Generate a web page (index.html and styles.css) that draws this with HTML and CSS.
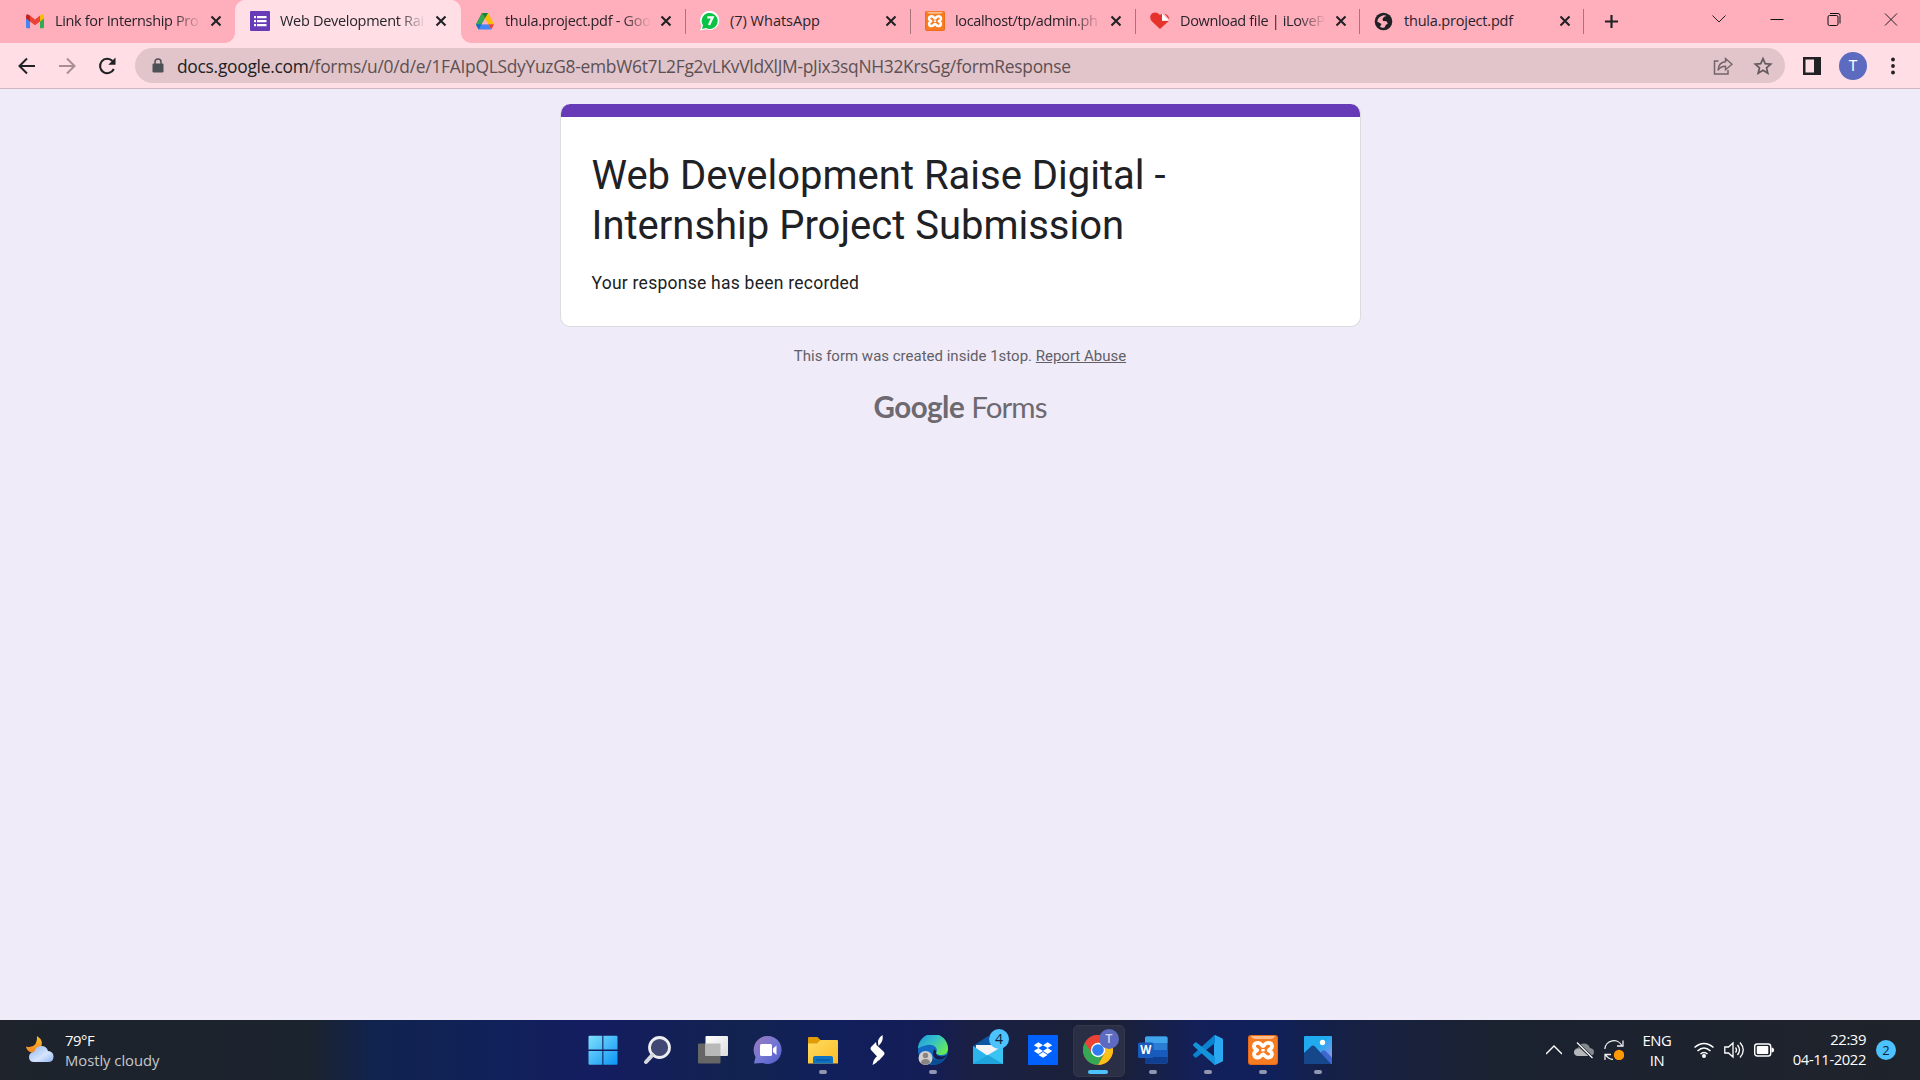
FILE: index.html
```html
<!DOCTYPE html>
<html lang="en">
<head>
<meta charset="utf-8">
<title>Web Development Raise Digital - Internship Project Submission</title>
<link rel="stylesheet" href="styles.css">
</head>
<body>
<svg class="defs" width="0" height="0">
  <defs>
    <symbol id="x" viewBox="0 0 16 16"><path d="M3.5 3.5l9 9M12.5 3.5l-9 9" stroke="#202124" stroke-width="2.1" fill="none"/></symbol>
    <symbol id="xampp" viewBox="0 0 30 30">
      <rect width="30" height="30" rx="3" fill="#e8691a"/><rect x="1" y="1" width="28" height="28" rx="2" fill="#f67b21"/><path d="M3 1h24q-1 3-5 3H8Q4 4 3 1z" fill="#ffbd8c"/>
      <path d="M15 11.200C13.500 11.200 13.600 7.800 10 7.800C5.200 7.800 5.200 12.600 7.600 14L9.200 15.200L7.600 16.400C5.200 18 5.600 22.500 9.700 22.500C13.400 22.500 13.500 19.400 15 19.400C16.500 19.400 16.600 22.500 20.300 22.500C24.400 22.500 24.800 18 22.400 16.400L20.800 15.200L22.400 14C24.800 12.600 24.800 7.800 20 7.800C16.400 7.800 16.500 11.200 15 11.200z" fill="none" stroke="#fff" stroke-width="3.8" stroke-linejoin="round"/><path d="M13.300 15.200h3.400" stroke="#fff" stroke-width="2.400"/>
    </symbol>
  </defs>
</svg>
<div class="screen">
  <header class="tabstrip">
    <div class="tabs">
      <div class="tab">
        <svg class="fav" viewBox="0 0 20 20"><path d="M1 5.500V16.200Q1 17.300 2.200 17.300H5V9z" fill="#4285f4"/><path d="M19 5.500V16.200Q19 17.300 17.800 17.300H15V9z" fill="#34a853"/><path d="M1 5.500Q1 3 3 3.400L5 4.600V10.500L1 7.400z" fill="#c5221f"/><path d="M5 4.600l5 3.800 5-3.800V10.500l-5 3.800-5-3.800z" fill="#ea4335"/><path d="M15 4.600l2-1.200Q19 3 19 5.500v1.900l-4 3.100z" fill="#fbbc04"/></svg>
        <span class="title fade t1">Link for Internship Pro</span><svg class="close"><use href="#x"/></svg>
      </div>
      <div class="tab active">
        <svg class="fav" viewBox="0 0 20 20"><rect width="20" height="20" rx="1" fill="#673ab7"/><path d="M4 5h2v2.200H4zM4 9h2v2.200H4zM4 13h2v2.200H4zM7 5h9.500v2.200H7zM7 9h9.500v2.200H7zM7 13h9.500v2.200H7z" fill="#fff"/></svg>
        <span class="title fade t2">Web Development Rai</span><svg class="close"><use href="#x"/></svg>
      </div>
      <div class="tab">
        <svg class="fav" viewBox="0 0 20 20"><path d="M7 2h6L6.500 13.500 3.700 18.500 1 13.500z" fill="#188038"/><path d="M7 2l3 5.300-6.300 11.200L1 13.300z" fill="#34a853"/><path d="M7 2h6l6 11.300h-6z" fill="#fbbc04"/><path d="M7 2h6l-3 5.300z" fill="#188038"/><path d="M13 13.300h6l-2.700 5.200z" fill="#ea4335"/><path d="M6.500 13.300H13l3.300 5.200H3.700z" fill="#4285f4"/><path d="M6.500 13.300H1l2.700 5.200z" fill="#1967d2"/><path d="M10 7.500l3.300 5.800H6.700z" fill="#ffb0bc"/></svg>
        <span class="title fade t3">thula.project.pdf - Goo</span><svg class="close"><use href="#x"/></svg>
      </div>
      <div class="tab sep">
        <svg class="fav" viewBox="0 0 20 20"><path d="M.2 19.500L1.500 14.500A9.600 9.600 0 1 1 6 18.300z" fill="#fff"/><path d="M2 18l1-3.700A8 8 0 1 1 6 17z" fill="#0ac245"/><path d="M7.300 6.300h5.300L9 14" fill="none" stroke="#fff" stroke-width="2.300"/></svg>
        <span class="title t4">(7) WhatsApp</span><svg class="close"><use href="#x"/></svg>
      </div>
      <div class="tab sep">
        <svg class="fav"><use href="#xampp"/></svg>
        <span class="title fade t5">localhost/tp/admin.ph</span><svg class="close"><use href="#x"/></svg>
      </div>
      <div class="tab sep">
        <svg class="fav" viewBox="0 0 20 20"><path d="M10 18L1.500 10Q-1.500 5 2.200 2.300 6.500.2 10 4l2-1.500v7h7.300z" fill="#e5322d"/><path d="M12 2.500l7.300 7.300H12z" fill="#fff"/><path d="M14.500 2.500q4.500 1.500 4.700 6z" fill="#e5322d"/></svg>
        <span class="title fade t6">Download file | iLoveP</span><svg class="close"><use href="#x"/></svg>
      </div>
      <div class="tab sep last">
        <svg class="fav" viewBox="0 0 20 20"><circle cx="9.500" cy="10.500" r="8.800" fill="#202124"/><path d="M9.500 4.200l2.500.3-1.200 3-2.300.8L9 10l3.500.2 1.300 2.300-2 1.500-1.300 2.500q-2.500.8-4.500-.7L7.500 13l-4.300-2.500Q4 5.500 9.500 4.200z" fill="#ffaebc"/><path d="M10.500 5.500l4 .5 1 3-4 .5-3-2z" fill="#202124"/></svg>
        <span class="title t7">thula.project.pdf</span><svg class="close"><use href="#x"/></svg>
      </div>
    </div>
    <svg class="newtab" viewBox="0 0 16 16"><path d="M8 1v14M1 8h14" stroke="#202124" stroke-width="2.300"/></svg>
    <div class="winctl">
      <svg viewBox="0 0 16 16"><path d="M1.500 4.500L8 11l6.500-6.500" stroke="#222" fill="none"/></svg>
      <svg viewBox="0 0 16 16"><path d="M1.500 8.500h13" stroke="#111"/></svg>
      <svg viewBox="0 0 16 16"><rect x="2" y="4.500" width="10" height="10" rx="1.500" fill="none" stroke="#111"/><path d="M4 2.500h8Q14 2.500 14 4.500v8" fill="none" stroke="#111"/></svg>
      <svg viewBox="0 0 16 16"><path d="M2 2.500l12 12M14 2.500l-12 12" stroke="#222"/></svg>
    </div>
  </header>
  <nav class="toolbar">
    <svg class="nav" viewBox="0 0 20 20"><path d="M18 10H3M10 2.500L2.500 10l7.500 7.500" fill="none" stroke="#202124" stroke-width="2"/></svg>
    <svg class="nav" viewBox="0 0 20 20"><path d="M2 10h15M10 2.500l7.500 7.500-7.500 7.500" fill="none" stroke="#a98e93" stroke-width="2"/></svg>
    <svg class="nav" viewBox="0 0 20 20"><path d="M16.800 13A7.200 7.200 0 1 1 15.500 5" fill="none" stroke="#202124" stroke-width="2.100"/><path d="M18.500 1.500v7.200h-7.200z" fill="#202124"/></svg>
    <div class="omnibox">
      <svg class="lock" viewBox="0 0 12 16"><rect x=".5" y="5.500" width="11" height="9" rx="1.300" fill="#4d5156"/><path d="M3 6V4a3 3 0 0 1 6 0v2" fill="none" stroke="#4d5156" stroke-width="1.500"/></svg>
      <span class="url"><span class="host">docs.google.com</span>/forms/u/0/d/e/1FAIpQLSdyYuzG8-embW6t7L2Fg2vLKvVldXlJM-pJix3sqNH32KrsGg/formResponse</span>
      <svg class="act" viewBox="0 0 20 20"><path d="M5.500 5H1.500v13h13.500v-4" fill="none" stroke="#716568" stroke-width="1.500"/><path d="M12.500 2.500l6.500 5.800-6.500 5.500v-3.500q-5 0-7.500 4 .5-8 7.500-8.500z" fill="none" stroke="#716568" stroke-width="1.400"/></svg>
      <svg class="act" viewBox="0 0 20 20"><path d="M10 2.600l2.200 5.100 5.500.5-4.200 3.600 1.300 5.400L10 14.300l-4.800 2.900 1.300-5.400L2.300 8.200l5.500-.5z" fill="none" stroke="#625a5d" stroke-width="1.700"/></svg>
    </div>
    <svg class="panel" viewBox="0 0 18 18"><path d="M0 0h18v18H0zM2.500 2.500v13h8.500v-13z" fill="#202124" fill-rule="evenodd"/></svg>
    <span class="avatar">T</span>
    <svg class="menu" viewBox="0 0 6 18"><g fill="#202124"><circle cx="3" cy="2.500" r="1.900"/><circle cx="3" cy="9" r="1.900"/><circle cx="3" cy="15.500" r="1.900"/></g></svg>
  </nav>
  <main class="page">
    <section class="card">
      <h1>Web Development Raise Digital - Internship Project Submission</h1>
      <p>Your response has been recorded</p>
    </section>
    <p class="notice">This form was created inside 1stop. <a>Report Abuse</a></p>
    <div class="brand"><b>Google</b><span>Forms</span></div>
  </main>
  <footer class="taskbar">
    <div class="weather">
      <svg viewBox="0 0 30 30"><defs><linearGradient id="cl" x2="1" y2="1"><stop stop-color="#8db4f5"/><stop offset=".6" stop-color="#d6e5fc"/><stop offset="1" stop-color="#8fb2f2"/></linearGradient><linearGradient id="mo" x2="0" y2="1"><stop stop-color="#f9c22e"/><stop offset="1" stop-color="#f58220"/></linearGradient></defs><path d="M12 1q8 5 3 13Q11 20 5 17 1.500 15 1 11.500 7 13.500 10.500 9 12.500 5 12 1z" fill="url(#mo)"/><path d="M9 27q-5 0-5-5 0-4.500 5-5Q11 11 16.500 11q5 0 6.500 5 5.500.5 5.500 5.500 0 5.500-5.500 5.500z" fill="url(#cl)"/></svg>
      <div class="wtext"><span class="temp">79°F</span><span class="cond">Mostly cloudy</span></div>
    </div>
    <div class="apps">
      <div class="app"><svg viewBox="0 0 30 30"><defs><linearGradient id="win" x2="1" y2="1"><stop stop-color="#7fe1fb"/><stop offset="1" stop-color="#0b93f7"/></linearGradient></defs><path d="M.5 1.800Q.5.800 1.500.800H14.300V14.600H.5zM15.400.800H28.500Q29.500.800 29.500 1.800V14.600H15.400zM.5 15.900H14.300V29.700H1.500Q.5 29.700.5 28.700zM15.400 15.900H29.500V28.700Q29.500 29.700 28.500 29.700H15.400z" fill="url(#win)"/></svg></div>
      <div class="app"><svg viewBox="0 0 30 30"><circle cx="16.500" cy="12.500" r="10" fill="#414873" stroke="#eceef0" stroke-width="2.800"/><path d="M9.500 19.800L3 27" stroke="#d6dade" stroke-width="4" stroke-linecap="round"/></svg></div>
      <div class="app"><svg viewBox="0 0 30 30"><defs><linearGradient id="tv" x2="1" y2="1"><stop stop-color="#fff"/><stop offset="1" stop-color="#dcdcdc"/></linearGradient></defs><rect x="0" y="8.500" width="22.500" height="20" rx="1" fill="#666"/><rect x="7.500" y="1" width="22.500" height="20" rx="1" fill="url(#tv)"/><path d="M7.500 8.500h15V21h-15z" fill="#b9b9b9"/></svg></div>
      <div class="app"><svg viewBox="0 0 30 30"><defs><linearGradient id="ch" x2="1" y2="1"><stop stop-color="#9f77b8"/><stop offset=".5" stop-color="#7478d4"/><stop offset="1" stop-color="#5059c9"/></linearGradient></defs><path d="M1 28.500L2.500 22A14 14 0 1 1 9.500 28z" fill="url(#ch)"/><rect x="7" y="9" width="12" height="12" rx="1.500" fill="#fff"/><path d="M20 13.500l3.500-3v9.500l-3.500-3z" fill="#fff"/></svg></div>
      <div class="app run"><svg viewBox="0 0 30 30"><defs><linearGradient id="fo" x2="1" y2="1"><stop stop-color="#ffdc62"/><stop offset="1" stop-color="#fcbb26"/></linearGradient></defs><path d="M0 3q0-1 1-1h8.500l3 3H28v8H0z" fill="#e29b07"/><path d="M0 8.500h9l3.500-3.500H29q1 0 1 1v22.500H0z" fill="url(#fo)"/><path d="M5 28.500v-6Q5 21 7 21h16q2 0 2 1.500v6z" fill="#0c72c4"/><path d="M8 25h14" stroke="#064c91"/></svg></div>
      <div class="app"><svg viewBox="0 0 30 30"><path d="M19.500 0q1 4.500-1.500 8l-2.500 3-.5-3.500Q14.500 3.500 19.500 0zM13 7L8.500 11.500q-2 2 0 4L15 22.500l.5 3.500 5-5.500q2-2 0-4L13.500 10zM14.500 21q-4 2.500-5 9 5-2.500 6-5.500z" fill="#fff"/></svg></div>
      <div class="app run"><svg viewBox="0 0 30 30"><defs><linearGradient id="ed" x1="0" y1="0" x2="1" y2=".7"><stop stop-color="#1a91dc"/><stop offset=".5" stop-color="#35c1c9"/><stop offset="1" stop-color="#66eb55"/></linearGradient></defs><circle cx="15" cy="15" r="15" fill="#126cc5"/><path d="M0 13.500A15 15 0 0 1 30 14q0 5.500-6 6-5 0-6-2 2-3-.5-6Q12 7 0 13.500z" fill="url(#ed)"/><path d="M11 18q2 7 9 7 5 0 8-3-4 8-13 8Q9 27 11 18z" fill="#0c4d91"/><path d="M18 18q0 3 6 3.500l5-1.500q-4 6-11 4-5-3-2-9.500 3 1 2 3.500z" fill="#141d4e"/><circle cx="7.500" cy="23" r="7" fill="#d1cfcd"/><circle cx="7.500" cy="20.500" r="2.700" fill="#888480"/><path d="M3 28q0-4 4.500-4t4.500 4q-4.500 3.500-9 0z" fill="#888480"/></svg></div>
      <div class="app"><svg viewBox="0 0 30 30"><path d="M0 11L15 1l15 10v5H0z" fill="#0b56a3"/><path d="M3 10h24v8L15 25 3 16z" fill="#f3f3f3"/><path d="M0 11l21 18H0z" fill="#159fe0"/><path d="M30 11v18H0z" fill="#39c4f3"/><path d="M0 11l15 10L0 29z" fill="#2cb4ec"/><path d="M30 29H0l15-9z" fill="#1fa4dd"/></svg><span class="count">4</span></div>
      <div class="app"><svg viewBox="0 0 30 30"><path d="M0 0h30v30H0z" fill="#0061ff"/><path d="M10.400 7.300L15 10.200 10.400 13.100 5.800 10.200zM19.600 7.300l4.600 2.900-4.600 2.900L15 10.200zM10.400 13.100L15 16l-4.600 2.900L5.800 16zM19.600 13.100l4.600 2.900-4.600 2.900L15 16zM15 17l4.600 2.900L15 22.800l-4.600-2.900z" fill="#fff"/></svg></div>
      <div class="app run current"><svg viewBox="0 0 30 30"><circle cx="15" cy="15" r="15" fill="#ea4335"/><path d="M2 7.500A15 15 0 0 0 15 30l6.200-11.500L9 18.500z" fill="#34a853"/><path d="M28 7.500A15 15 0 0 1 15 30l6.500-11.500L15 7.500z" fill="#fbc116"/><path d="M2 7.500A15 15 0 0 1 28 7.500H15L9 18.500z" fill="#ea4335"/><circle cx="15" cy="15" r="7.200" fill="#fff"/><circle cx="15" cy="15" r="5.800" fill="#2d7cf0"/></svg><span class="profile">T</span></div>
      <div class="app run"><svg viewBox="0 0 30 30"><rect x="7" y="1.500" width="22.500" height="27" rx="1.500" fill="#2b7cd3"/><path d="M7 8V3q0-1.500 1.500-1.500H28q1.500 0 1.500 1.500v5z" fill="#41a5ee"/><path d="M7 15h22.500v7H7z" fill="#185abd"/><path d="M7 22h22.500v5q0 1.500-1.500 1.500H8.500Q7 28.500 7 27z" fill="#103f91"/><rect x="0" y="7.500" width="15.500" height="15.500" rx="1.500" fill="#185abd"/><text x="7.750" y="19.200" text-anchor="middle" font-size="11.500" font-weight="700" fill="#fff">W</text></svg></div>
      <div class="app run"><svg viewBox="0 0 30 30"><path d="M22 0l7 3.300q1 .5 1 1.500v20.400q0 1-1 1.500L22 30l-1-1V1z" fill="#2aa9f2"/><path d="M22 0v8L3.500 22.500Q2.500 23 1.500 22L.5 21q-1-1 0-2L21 .600z" fill="#0b82cf"/><path d="M22 30v-8L3.500 7.500Q2.500 7 1.500 8L.5 9q-1 1 0 2L21 29.400z" fill="#1592dc"/></svg></div>
      <div class="app run"><svg><use href="#xampp"/></svg></div>
      <div class="app run"><svg viewBox="0 0 30 30"><defs><linearGradient id="ph" x2="1" y2="1"><stop offset=".45" stop-color="#20aaf0"/><stop offset="1" stop-color="#b58ee6"/></linearGradient></defs><rect x="1" y="1" width="28" height="28" rx="1" fill="url(#ph)"/><path d="M15 21l4-5q2-1.500 3.500 0L29 22.500V29H15z" fill="#3d67d1"/><path d="M1 18l7.500-7q1.500-1 3 0L28 29H1z" fill="#15478a"/><circle cx="19.500" cy="7.500" r="2.700" fill="#fff"/></svg></div>
    </div>
    <div class="tray">
      <svg class="chev" viewBox="0 0 16 20"><path d="M0 14l8-8 8 8" fill="none" stroke="#fff" stroke-width="1.400"/></svg>
      <svg class="cloud" viewBox="0 0 20 20"><path d="M5 16Q0 16 0 12 0 8.500 4 8 5.500 3.500 10 3.500q4.500 0 6 4.500 4 .5 4 4t-4 4z" fill="#85888d"/><path d="M5 16Q0 16 0 12q2-4 6-3l9 7z" fill="#b5b7ba"/><path d="M2.500 2.500l15.500 15" stroke="#1c222d" stroke-width="3"/><path d="M3 2.500l15.500 15.500" stroke="#fff" stroke-width="1.200"/></svg>
      <svg class="sync" viewBox="0 0 20 20"><path d="M.8 9A9 9 0 0 1 18 6M19 .5V6h-6M9 19.500Q4 19 1.500 14.500M1 20v-5.500h6" fill="none" stroke="#eee" stroke-width="1.300"/><circle cx="15" cy="15" r="5.200" fill="#f90"/></svg>
      <div class="lang"><span>ENG</span><span>IN</span></div>
      <svg class="wifi" viewBox="0 0 20 20"><path d="M.5 7.500q9.500-8 19 0M3.500 11q6.500-6 13 0M6.500 14q3.500-3 7 0" fill="none" stroke="#fff" stroke-width="1.500"/><circle cx="10" cy="16" r="2" fill="#fff"/></svg>
      <svg class="vol" viewBox="0 0 20 20"><path d="M.8 7h3.700L9 3v14l-4.500-4H.8zM11.500 7.500q2 2.500 0 5M13.500 5q4 5 0 10M16 2.500q6.500 7.500 0 15" fill="none" stroke="#fff" stroke-width="1.300"/></svg>
      <svg class="bat" viewBox="0 0 20 20"><rect x=".7" y="4" width="16" height="12" rx="2.500" fill="none" stroke="#fff" stroke-width="1.400"/><rect x="2.800" y="6" width="11.500" height="8" rx="1" fill="#fff"/><path d="M17.500 7.500Q20 7.500 20 10t-2.500 2.500z" fill="#fff"/></svg>
      <div class="clock"><span class="time">22:39</span><span class="date">04-11-2022</span></div>
      <span class="notif">2</span>
    </div>
  </footer>
</div>
</body>
</html>
```
FILE: styles.css
```css
* { box-sizing: border-box; }
body { margin: 0; font-family: "Open Sans", "Noto Sans", sans-serif; }
svg { display: block; flex: none; }
.defs { position: absolute; }
.screen { width: 1920px; height: 1080px; display: flex; flex-direction: column; overflow: hidden; background: #f0ebf8; }

/* Tab strip */
.tabstrip { height: 43px; flex: none; display: flex; align-items: center; background: #ffaebc; padding-left: 10px; }
.tabs { display: flex; height: 43px; }
.tab { width: 225px; height: 43px; display: flex; align-items: center; padding: 0 8px 1px 15px; position: relative; }
.tab:nth-child(n+6) { width: 224px; }
.tab.active { background: #ffdfe5; border-radius: 10px 10px 0 0; z-index: 1; box-shadow: 1px 0 #ffdfe5; }
.tab.active::before, .tab.active::after { content: ""; position: absolute; bottom: 0; width: 10px; height: 10px; }
.tab.active::before { left: -10px; background: radial-gradient(circle at 0 0, #ffaebc 9.5px, #ffdfe5 10px); }
.tab.active::after { right: -11px; background: radial-gradient(circle at 100% 0, #ffaebc 9.5px, #ffdfe5 10px); }
.tab.sep::before, .tab.last::after { content: ""; position: absolute; left: 0; top: 9px; width: 1px; height: 25px; background: #a8737c; }
.tab.last::after { left: auto; right: -1px; }
.fav { width: 20px; height: 20px; margin-right: 10px; }
.title { width: 148px; font-size: 14.5px; line-height: 20px; white-space: nowrap; color: #26242b; letter-spacing: -0.35px; }
.t2 { letter-spacing: -0.3px; }
.t3 { letter-spacing: -0.3px; }
.t4 { letter-spacing: 0; }
.t7 { letter-spacing: -0.2px; }
.fade { -webkit-mask-image: linear-gradient(90deg, #000 118px, transparent 146px); mask-image: linear-gradient(90deg, #000 118px, transparent 146px); }
.close { width: 16px; height: 16px; margin-left: 5px; }
.newtab { width: 15px; height: 15px; margin-left: 21px; }
.winctl { display: flex; gap: 41.2px; margin-left: auto; padding: 0 21px 6px 0; }
.winctl svg { width: 16px; height: 16px; }

/* Toolbar */
.toolbar { height: 46px; flex: none; display: flex; align-items: center; background: #ffdfe5; border-bottom: 1px solid #d1b6bd; padding: 0 24px 0 17px; }
.nav { width: 20px; height: 20px; margin-right: 20px; }
.nav:nth-child(3) { margin-right: 18px; }
.omnibox { width: 1650px; height: 35px; border-radius: 18px; background: #e1c5ca; display: flex; align-items: center; padding: 0 12px 0 17px; }
.lock { width: 12px; height: 16px; }
.url { margin-left: 13px; flex: 1; font-size: 17.4px; color: #5d5054; white-space: nowrap; letter-spacing: -0.28px; }
.host { color: #202124; }
.act { width: 20px; height: 20px; margin-left: 20px; }
.panel { width: 18px; height: 18px; margin-left: 18px; }
.avatar { width: 28px; height: 28px; border-radius: 50%; background: #5c6bc0; color: #fff; font: 15px/28px Roboto, sans-serif; text-align: center; margin: 0 auto 0 18px; }
.menu { width: 6px; height: 18px; }

/* Form confirmation */
.page { flex: 1; display: flex; flex-direction: column; align-items: center; padding-top: 15px; font-family: Roboto, sans-serif; }
.card { width: 801px; height: 223px; border: 1px solid #dadce0; border-top: 0; border-radius: 10px; padding: 47px 31px 0; color: #202124; background: linear-gradient(#673ab7 13px, #fff 13px) border-box; }
h1 { margin: 0; font-size: 40px; line-height: 50px; font-weight: 400; }
.card p { margin: 20px 0 0; font-size: 17.5px; line-height: 25px; letter-spacing: 0.25px; }
.notice { margin: 18px 0 0; font-size: 15px; line-height: 22px; letter-spacing: 0; color: #625f66; }
.notice a { text-decoration: underline; }
.brand { display: flex; gap: 7px; margin-top: 21px; font-family: Lato, sans-serif; font-size: 29.5px; line-height: 38px; color: #6c6970; }
.brand b { font-weight: 700; letter-spacing: -0.5px; }
.brand span { letter-spacing: -0.9px; }

/* Taskbar */
.taskbar { height: 60px; flex: none; display: grid; grid-template-columns: 575px 770px 1fr; align-items: center; color: #fff;
  background: linear-gradient(90deg, #1e232c 0, #1b232e 310px, #11234f 375px, #11215a 500px, #141d60 600px, #12234f 740px, #111f5c 840px, #141d55 930px, #1a2044 970px, #1b2036 1110px, #13205a 1200px, #10205a 1270px, #152048 1330px, #182140 1380px, #1b2230 1500px, #1f232b 1920px); }
.weather { display: flex; align-items: center; padding-left: 25px; gap: 10px; }
.weather svg { width: 30px; height: 30px; }
.wtext { display: flex; flex-direction: column; font-size: 14.8px; line-height: 20px; letter-spacing: -0.4px; }
.cond { color: #c6c8cb; letter-spacing: -0.03px; }
.apps { display: flex; height: 60px; }
.app { width: 55px; height: 60px; display: flex; align-items: center; justify-content: center; position: relative; }
.app svg { width: 30px; height: 30px; position: relative; left: 0.5px; }
.run::after { content: ""; position: absolute; left: 24px; bottom: 6px; width: 8px; height: 4px; border-radius: 2px; background: #9197b2; }
.current::before { content: ""; position: absolute; left: 3px; top: 5px; width: 50px; height: 50px; border-radius: 5px; background: #2b2f46; border: 1px solid #34384d; }
.current::after { left: 18px; width: 20px; background: #4cc2ff; }
.count, .profile { position: absolute; width: 20px; height: 20px; border-radius: 50%; text-align: center; line-height: 20px; }
.count { left: 29px; top: 9px; background: #4cc2ff; color: #10202c; font-size: 14px; }
.profile { left: 29px; top: 9px; background: #5c6bc0; color: #ced3ee; font-size: 12px; font-family: Roboto, sans-serif; font-weight: 500; }
.tray { display: flex; align-items: center; justify-content: flex-end; padding-right: 24px; font-size: 14.8px; line-height: 20px; }
.tray svg { width: 20px; height: 20px; }
.tray .chev { width: 16px; margin-right: 12px; }
.cloud { margin-right: 10px; }
.lang { width: 34px; margin: 0 20px 0 16px; display: flex; flex-direction: column; align-items: center; letter-spacing: -0.4px; }
.wifi, .vol { margin-right: 10px; }
.clock { width: 92px; display: flex; flex-direction: column; align-items: flex-end; letter-spacing: -0.4px; padding-bottom: 2px; }
.notif { width: 20px; height: 20px; margin-left: 10px; border-radius: 50%; background: #4cc2ff; color: #10202c; font-size: 13px; text-align: center; }
```
